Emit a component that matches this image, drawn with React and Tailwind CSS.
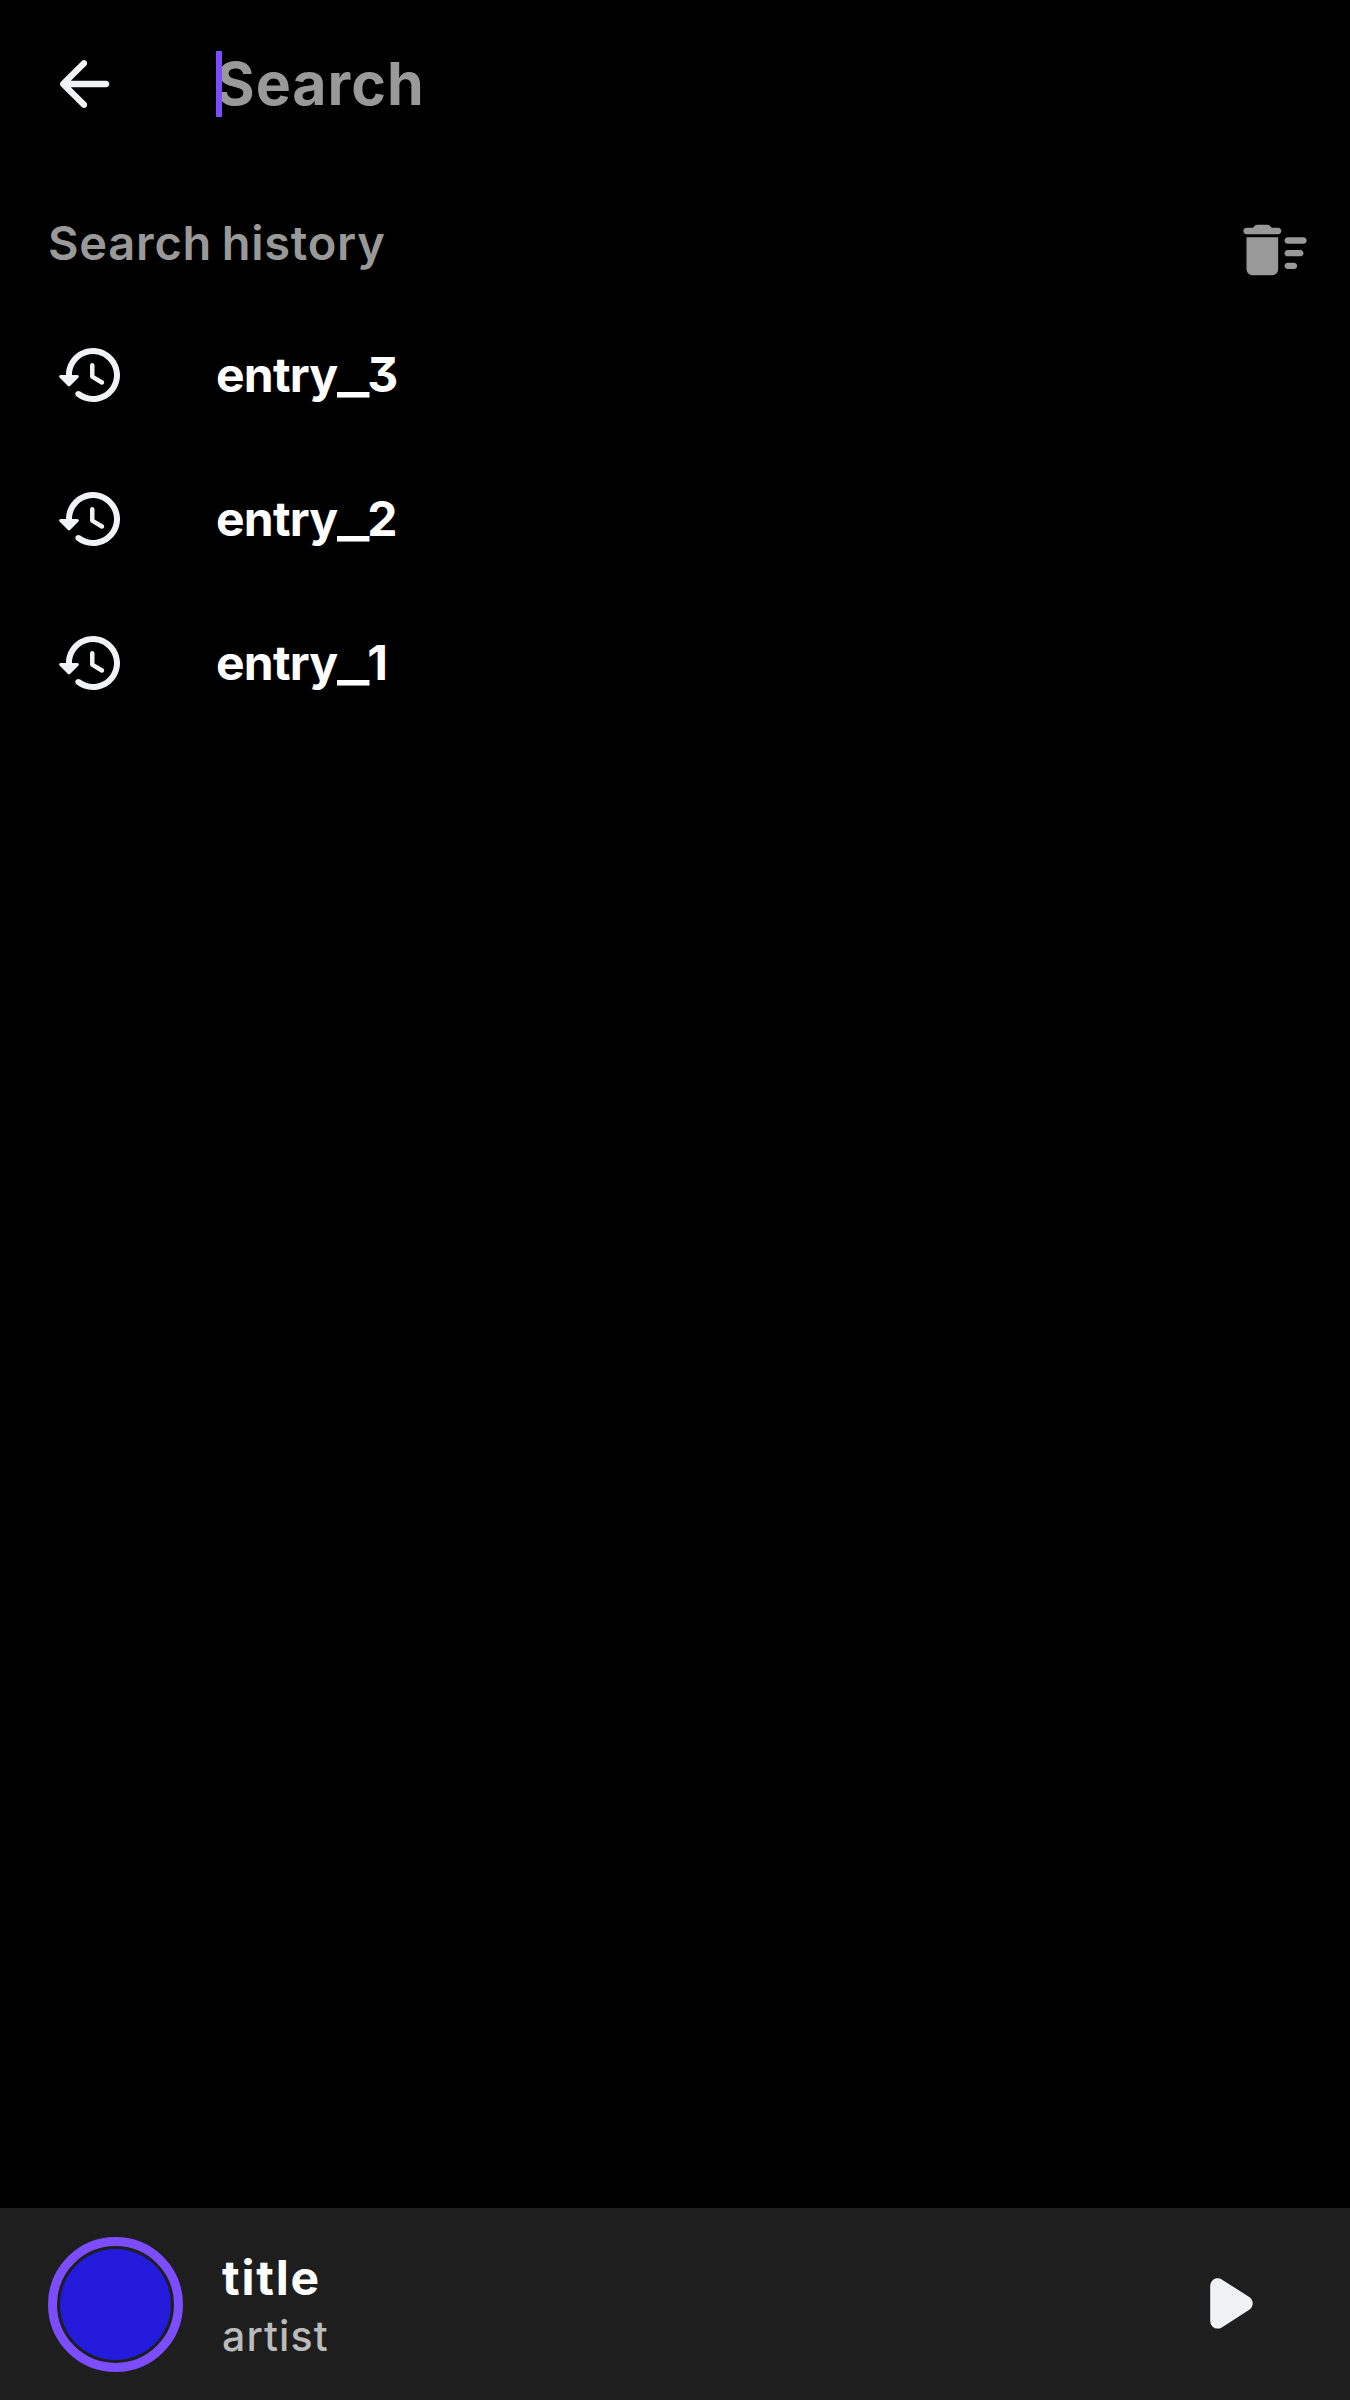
import { useState } from "react";

function BackIcon() {
  return (
    <svg className="h-[76px] w-[76px] shrink-0 fill-[#f1f2f4]" viewBox="0 0 24 24" aria-hidden="true">
      <path d="M19 11H7.83l4.88-4.88c.39-.39.39-1.03 0-1.42-.39-.39-1.02-.39-1.41 0l-6.59 6.59c-.39.39-.39 1.02 0 1.41l6.59 6.59c.39.39 1.02.39 1.41 0 .39-.39.39-1.02 0-1.41L7.83 13H19c.55 0 1-.45 1-1s-.45-1-1-1z" />
    </svg>
  );
}

function ClearIcon() {
  return (
    <svg className="h-[76px] w-[76px] fill-[#999999]" viewBox="0 0 24 24" aria-hidden="true">
      <path d="M16 16h2c.55 0 1 .45 1 1s-.45 1-1 1h-2c-.55 0-1-.45-1-1s.45-1 1-1zM16 8h5c.55 0 1 .45 1 1s-.45 1-1 1h-5c-.55 0-1-.45-1-1s.45-1 1-1zM16 12h4c.55 0 1 .45 1 1s-.45 1-1 1h-4c-.55 0-1-.45-1-1s.45-1 1-1zM3 18c0 1.1.9 2 2 2h6c1.1 0 2-.9 2-2V8H3v10zM13 5h-2l-.71-.71c-.18-.18-.44-.29-.7-.29H6.41c-.26 0-.52.11-.7.29L5 5H3c-.55 0-1 .45-1 1s.45 1 1 1h10c.55 0 1-.45 1-1s-.45-1-1-1z" />
    </svg>
  );
}

function HistoryIcon() {
  return (
    <svg className="h-[72px] w-[72px] shrink-0 fill-[#f1f2f4]" viewBox="0 0 24 24" aria-hidden="true">
      <path d="M13.26 3C8.17 2.86 4 6.95 4 12H2.21c-.45 0-.67.54-.35.85l2.79 2.8c.2.2.51.2.71 0l2.79-2.8c.31-.31.09-.85-.36-.85H6c0-3.9 3.18-7.05 7.1-7 3.72.05 6.85 3.18 6.9 6.9.05 3.91-3.1 7.1-7 7.1-1.61 0-3.1-.55-4.28-1.48-.4-.31-.96-.28-1.32.08-.42.42-.39 1.13.08 1.49C9 20.29 10.91 21 13 21c5.05 0 9.14-4.17 9-9.26-.13-4.69-4.05-8.61-8.74-8.74zm-.51 5c-.41 0-.75.34-.75.75v3.68c0 .35.19.68.49.86l3.12 1.85c.36.21.82.09 1.03-.26.21-.36.09-.82-.26-1.03l-2.88-1.71v-3.4c0-.4-.34-.74-.75-.74z" />
    </svg>
  );
}

function PlayIcon() {
  return (
    <svg
      className="h-[51px] w-[43px] fill-[#f1f2f4] stroke-[#f1f2f4]"
      viewBox="0 0 43 51"
      strokeWidth="15"
      strokeLinejoin="round"
      aria-hidden="true"
    >
      <path d="M7.7 7.7v35.4L35.2 25.4z" />
    </svg>
  );
}

function HistoryRow({ number }) {
  return (
    <li className="flex h-36 items-center pl-[54px]">
      <HistoryIcon />
      <span className="ml-[90px] pb-[1px] text-[48px] leading-[59px] font-bold tracking-[-0.8px] whitespace-nowrap text-white [font-feature-settings:'cv09']">
        entry<span className="inline-block w-[30px] origin-left scale-x-[1.42]">_</span>{number}
      </span>
    </li>
  );
}

export default function App() {
  const [entries] = useState([3, 2, 1]);
  return (
    <div className="flex h-[2400px] w-[1350px] flex-col overflow-hidden bg-black font-['Inter',sans-serif]">
      <header className="flex h-[168px] items-center pl-[46px]">
        <BackIcon />
        <div className="relative ml-[94px] text-[59px] leading-[72px] font-bold tracking-[1px] text-[#999999]">
          Search
          <span className="absolute top-[3px] left-0 h-[66px] w-[6px] bg-[#7c4dff]" />
        </div>
      </header>

      <section className="flex h-[135px] items-start justify-between pr-[37px] pl-12">
        <h2 className="mt-[45px] text-[47px] leading-[60px] font-semibold tracking-[0.75px] text-[#999999] [word-spacing:-3px]">
          Search history
        </h2>
        <button className="mt-[44px]" aria-label="Clear">
          <ClearIcon />
        </button>
      </section>

      <ul>
        {entries.map((n) => (
          <HistoryRow key={n} number={n} />
        ))}
      </ul>

      <footer className="mt-auto flex h-48 items-center bg-[#1e1e1e] pr-[97px] pl-12">
        <div className="h-[135px] w-[135px] rounded-full border-[9px] border-[#7c4dff] p-[3px]">
          <div className="h-full w-full rounded-full bg-[#231adc]" />
        </div>
        <div className="ml-[39px] flex flex-col pt-[5px]">
          <span className="text-[48px] leading-[59px] font-bold tracking-[1.8px] text-white">title</span>
          <span className="text-[41px] leading-[58px] font-medium tracking-[1.1px] text-[#bbbbbb]">artist</span>
        </div>
        <button className="mb-[1px] ml-auto" aria-label="Play">
          <PlayIcon />
        </button>
      </footer>
    </div>
  );
}
